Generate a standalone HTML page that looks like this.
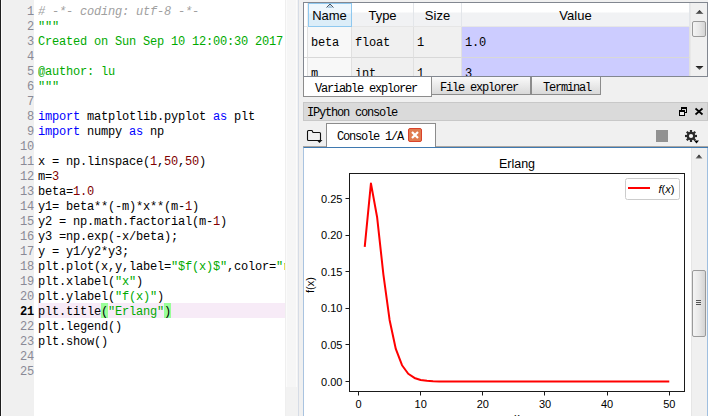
<!DOCTYPE html>
<html><head><meta charset="utf-8">
<style>
*{margin:0;padding:0;box-sizing:border-box}
html,body{width:708px;height:416px;overflow:hidden;background:#f0f0f0;position:relative}
.a{position:absolute}
#ed{left:0;top:0;width:297px;height:416px;background:#fff}
#edl{left:0;top:0;width:1px;height:416px;background:#1e1e1e}
#edw{left:1px;top:0;width:1px;height:416px;background:#fafafa}
#gut{left:2px;top:0;width:32px;height:416px;background:#f0f0f0}
#scr{left:285px;top:0;width:13px;height:416px;background:linear-gradient(90deg,#efefef 0,#efefef 1px,#fbfbfb 1px,#fbfbfb 2px,#f6f6f6 2px,#f6f6f6 11px,#fbfbfb 11px,#fbfbfb 12px,#f2f2f2 12px)}
#scrb{left:286px;top:387px;width:11px;height:29px;background:#f2f2f2}
#spl{left:298px;top:0;width:1px;height:416px;background:#d6dce6}
.code{font-family:"Liberation Mono",monospace;font-size:12px;letter-spacing:-0.2px;line-height:15px;white-space:pre}
#nums{left:2px;top:5px;width:32px;text-align:right;color:#8a8a96}
#src{left:38px;top:5px;width:247px;overflow:hidden;color:#000}
#cur{left:38px;top:303px;width:247px;height:15px;background:#f7ebf7}
.cm{color:#a0a0a0;font-style:italic}
.st{color:#00aa00}
.kw{color:#0000ff}
.nu{color:#800000}
.br{background:#99ff99}

/* right pane */
#tbl{left:303px;top:2px;width:405px;height:75px;border:1px solid #828790;background:#fff;overflow:hidden}
.hd{position:absolute;top:0;height:24px;background:linear-gradient(#ffffff 0,#ffffff 9px,#f1f2f4 10px,#f1f2f4 100%);border-right:1px solid #e3e6ea;border-bottom:1px solid #e6e6e6;font-family:"Liberation Sans",sans-serif;font-size:13px;color:#000;text-align:center;line-height:26px}
.cell{position:absolute;height:31px;border-right:1px solid #e0e0e0;border-bottom:1px solid #d8d8d8;font-family:"Liberation Mono",monospace;font-size:12px;letter-spacing:-0.2px;line-height:32px;padding-left:3px;color:#000}
.tab{position:absolute;font-family:"Liberation Mono",monospace;font-size:12px;letter-spacing:-1.2px;color:#000;white-space:pre}
</style></head><body>
<div class="a" id="ed"></div>
<div class="a" id="gut"></div>
<div class="a" id="edl"></div>
<div class="a" id="edw"></div>
<div class="a" id="cur"></div>
<div class="a" style="left:101px;top:303px;width:7px;height:15px;background:#99ff99"></div>
<div class="a" style="left:164px;top:303px;width:7px;height:15px;background:#99ff99"></div>
<div class="a" id="scr"></div>
<div class="a" id="scrb"></div>
<div class="a" id="spl"></div>
<div class="a code" id="nums">1
2
3
4
5
6
7
8
9
10
11
12
13
14
15
16
17
18
19
20
<b style="color:#000">21</b>
22
23
24
25</div>
<div class="a code" id="src"><span class="cm"># -*- coding: utf-8 -*-</span>
<span class="st">"""</span>
<span class="st">Created on Sun Sep 10 12:00:30 2017</span>

<span class="st">@author: lu</span>
<span class="st">"""</span>

<span class="kw">import</span> matplotlib.pyplot <span class="kw">as</span> plt
<span class="kw">import</span> numpy <span class="kw">as</span> np

x = np.linspace(<span class="nu">1</span>,<span class="nu">50</span>,<span class="nu">50</span>)
m=<span class="nu">3</span>
beta=<span class="nu">1.0</span>
y1= beta**(-m)*x**(m-<span class="nu">1</span>)
y2 = np.math.factorial(m-<span class="nu">1</span>)
y3 =np.exp(-x/beta);
y = y1/y2*y3;
plt.plot(x,y,label=<span class="st">"$f(x)$"</span>,color=<span class="st">"r"</span>)
plt.xlabel(<span class="st">"x"</span>)
plt.ylabel(<span class="st">"f(x)"</span>)
plt.title(<span class="st">"Erlang"</span>)
plt.legend()
plt.show()
</div>

<div class="a" id="tbl">
 <div class="hd" style="left:0;width:4px;background:#fff;border-right:1px solid #eee"></div>
 <div class="hd" style="left:4px;width:44px;background:linear-gradient(#eef7fd 0,#eef7fd 9px,#dcedf8 10px,#dcedf8 100%);border:1px solid #8fc8ef;text-indent:-1px;line-height:24px">Name</div>
 <div class="hd" style="left:48px;width:62px">Type</div>
 <div class="hd" style="left:110px;width:48px">Size</div>
 <div class="hd" style="left:158px;width:228px">Value</div>
 <div class="cell" style="left:0;top:24px;width:4px;background:#fff;padding:0"></div>
 <div class="cell" style="left:4px;top:24px;width:44px;background:#f8f8f8">beta</div>
 <div class="cell" style="left:48px;top:24px;width:62px;background:#f0f0f0">float</div>
 <div class="cell" style="left:110px;top:24px;width:48px;background:#f0f0f0">1</div>
 <div class="cell" style="left:158px;top:24px;width:228px;background:#ccccff">1.0</div>
 <div class="cell" style="left:0;top:55px;width:4px;background:#fff;padding:0"></div>
 <div class="cell" style="left:4px;top:55px;width:44px;background:#f8f8f8">m</div>
 <div class="cell" style="left:48px;top:55px;width:62px;background:#f0f0f0">int</div>
 <div class="cell" style="left:110px;top:55px;width:48px;background:#f0f0f0">1</div>
 <div class="cell" style="left:158px;top:55px;width:228px;background:#ccccff">3</div>
</div>

<div class="a" style="left:303px;top:77px;width:129px;height:20px;background:#fff;border:1px solid #8c8c8c;border-top:none"></div>
<div class="tab" style="left:315px;top:82px">Variable explorer</div>
<div class="a" style="left:431px;top:77px;width:100px;height:18px;background:linear-gradient(#fafafa,#e6e6e6 60%,#d9d9d9);border:1px solid #8c8c8c;border-top:none"></div>
<div class="tab" style="left:440px;top:80.5px">File explorer</div>
<div class="a" style="left:531px;top:77px;width:70px;height:18px;background:linear-gradient(#fafafa,#e6e6e6 60%,#d9d9d9);border:1px solid #8c8c8c;border-top:none"></div>
<div class="tab" style="left:543px;top:80.5px">Terminal</div>
<div class="a" style="left:303px;top:102px;width:405px;height:19px;background:#dadada;border:1px solid #c8c8c8"></div>
<div class="tab" style="left:307px;top:106px">IPython console</div>
<div class="a" style="left:326px;top:123px;width:110px;height:25px;background:#fff;border:1px solid #8c8c8c;border-bottom:none"></div>
<div class="tab" style="left:337px;top:130px">Console 1/A</div>
<div class="a" style="left:408px;top:128px;width:14px;height:14px;background:#e07b50;border:1px solid #d9432b;border-radius:2px"></div>
<svg class="a" style="left:408px;top:128px" width="14" height="14"><path d="M4 4L10 10M10 4L4 10" stroke="#fff" stroke-width="2.2"/></svg>
<div class="a" style="left:303px;top:147px;width:405px;height:269px;background:#fff;border-top:1px solid #3f79b0;border-left:1px solid #a9c3e0"></div>
<div class="a" style="left:303px;top:146px;width:23px;height:1px;background:#aaa6a2"></div>
<div class="a" style="left:436px;top:146px;width:272px;height:1px;background:#aaa6a2"></div>

<svg class="a" style="left:306px;top:128px" width="18" height="16"><path d="M2.5 2.5H6L7 4.5H13.5Q14.5 4.5 14.5 5.5V11.5Q14.5 12.5 13.5 12.5H2.5Q1.5 12.5 1.5 11.5V3.5Q1.5 2.5 2.5 2.5Z" fill="none" stroke="#111" stroke-width="1.1"/><path d="M10.5 12H16.5L13.5 15Z" fill="#111"/></svg>
<svg class="a" style="left:678px;top:106px" width="11" height="11"><rect x="3.5" y="1.5" width="5" height="5" fill="none" stroke="#000" stroke-width="1"/><path d="M3.5 2.5H8.5" stroke="#000" stroke-width="1"/><rect x="1.5" y="4.5" width="5" height="5" fill="#eeeeee" stroke="#000" stroke-width="1"/><path d="M1.5 5.5H6.5" stroke="#000" stroke-width="1"/></svg>
<svg class="a" style="left:694px;top:107px" width="10" height="10"><path d="M1.5 1.5L8.5 7.5M8.5 1.5L1.5 7.5" stroke="#000" stroke-width="1.7"/></svg>
<div class="a" style="left:656px;top:130px;width:12px;height:12px;background:#929292"></div>
<svg class="a" style="left:684px;top:129px" width="16" height="16"><g transform="translate(7,7)" fill="#2a2a2a"><circle r="4.3"/><rect x="-1.1" y="-6" width="2.2" height="12"/><rect x="-1.1" y="-6" width="2.2" height="12" transform="rotate(45)"/><rect x="-1.1" y="-6" width="2.2" height="12" transform="rotate(90)"/><rect x="-1.1" y="-6" width="2.2" height="12" transform="rotate(135)"/></g><circle cx="7" cy="7" r="2.1" fill="#f4f4f4"/><path d="M10 11.5H15L12.5 14.5Z" fill="#000"/></svg>

<svg class="a" id="plot" style="left:0;top:0" width="708" height="416" font-family="Liberation Sans" font-size="11" fill="#000">
<text x="517" y="168" text-anchor="middle" font-size="12.5">Erlang</text>
<rect x="349.5" y="173.5" width="335" height="218" fill="none" stroke="#1a1a1a" stroke-width="1"/>
<line x1="358.5" y1="391.5" x2="358.5" y2="395.5" stroke="#1a1a1a" stroke-width="1"/><text x="358.5" y="408" text-anchor="middle">0</text><line x1="420.5" y1="391.5" x2="420.5" y2="395.5" stroke="#1a1a1a" stroke-width="1"/><text x="420.7" y="408" text-anchor="middle">10</text><line x1="482.5" y1="391.5" x2="482.5" y2="395.5" stroke="#1a1a1a" stroke-width="1"/><text x="482.8" y="408" text-anchor="middle">20</text><line x1="544.5" y1="391.5" x2="544.5" y2="395.5" stroke="#1a1a1a" stroke-width="1"/><text x="545.0" y="408" text-anchor="middle">30</text><line x1="607.5" y1="391.5" x2="607.5" y2="395.5" stroke="#1a1a1a" stroke-width="1"/><text x="607.1" y="408" text-anchor="middle">40</text><line x1="669.5" y1="391.5" x2="669.5" y2="395.5" stroke="#1a1a1a" stroke-width="1"/><text x="669.3" y="408" text-anchor="middle">50</text><line x1="345.5" y1="381.5" x2="349.5" y2="381.5" stroke="#1a1a1a" stroke-width="1"/><text x="342.5" y="385.6" text-anchor="end">0.00</text><line x1="345.5" y1="344.5" x2="349.5" y2="344.5" stroke="#1a1a1a" stroke-width="1"/><text x="342.5" y="349.0" text-anchor="end">0.05</text><line x1="345.5" y1="308.5" x2="349.5" y2="308.5" stroke="#1a1a1a" stroke-width="1"/><text x="342.5" y="312.4" text-anchor="end">0.10</text><line x1="345.5" y1="271.5" x2="349.5" y2="271.5" stroke="#1a1a1a" stroke-width="1"/><text x="342.5" y="275.8" text-anchor="end">0.15</text><line x1="345.5" y1="235.5" x2="349.5" y2="235.5" stroke="#1a1a1a" stroke-width="1"/><text x="342.5" y="239.2" text-anchor="end">0.20</text><line x1="345.5" y1="198.5" x2="349.5" y2="198.5" stroke="#1a1a1a" stroke-width="1"/><text x="342.5" y="202.5" text-anchor="end">0.25</text>
<polyline points="364.73,246.91 370.94,183.41 377.16,217.55 383.37,274.31 389.59,319.92 395.80,348.92 402.02,365.23 408.23,373.73 414.45,377.93 420.66,379.93 426.88,380.85 433.09,381.27 439.31,381.45 445.53,381.53 451.74,381.57 457.96,381.58 464.17,381.59 470.39,381.59 476.60,381.59 482.82,381.59 489.03,381.59 495.25,381.59 501.46,381.59 507.68,381.59 513.89,381.59 520.11,381.59 526.32,381.59 532.54,381.59 538.75,381.59 544.97,381.59 551.18,381.59 557.40,381.59 563.61,381.59 569.83,381.59 576.04,381.59 582.26,381.59 588.47,381.59 594.69,381.59 600.91,381.59 607.12,381.59 613.34,381.59 619.55,381.59 625.77,381.59 631.98,381.59 638.20,381.59 644.41,381.59 650.63,381.59 656.84,381.59 663.06,381.59 669.27,381.59" fill="none" stroke="#ff0000" stroke-width="2" stroke-linejoin="round"/>
<text transform="translate(314,285) rotate(-90)" text-anchor="middle">f(x)</text>
<text x="517" y="421" text-anchor="middle">x</text>
<rect x="625.5" y="178.5" width="54" height="21" rx="2" fill="#fff" stroke="#cccccc"/>
<line x1="628" y1="188" x2="650" y2="188" stroke="#ff0000" stroke-width="2"/>
<text x="658.5" y="192.5"><tspan font-style="italic">f</tspan>(<tspan font-style="italic">x</tspan>)</text>
</svg>

<div class="a" style="left:691px;top:148px;width:17px;height:268px;background:#f0f0f0;border-left:1px solid #e6e6e6;border-right:1px solid #9fbfe0"></div>
<svg class="a" style="left:695px;top:153px" width="10" height="8"><defs><linearGradient id="ag" x1="0" y1="0" x2="0" y2="1"><stop offset="0" stop-color="#111"/><stop offset="1" stop-color="#777"/></linearGradient></defs><path d="M0.5 5.5L4 1.5L7.5 5.5Z" fill="url(#ag)"/></svg>
<div class="a" style="left:692px;top:270px;width:14px;height:67px;border:1px solid #9a9a9a;border-radius:2px;background:linear-gradient(90deg,#f4f4f4,#e8e8e8 50%,#d4d4d4)"></div>
<svg class="a" style="left:695px;top:299px" width="8" height="8"><path d="M1 1.5H6M1 3.5H6M1 5.5H6" stroke="#555" stroke-width="1"/></svg>

<div class="a" style="left:690px;top:3px;width:17px;height:73px;background:#f0f0f0;border-left:1px solid #e8e8e8"></div>
<svg class="a" style="left:695px;top:9px" width="10" height="8"><path d="M0.5 5L4.5 1L8.5 5Z" fill="url(#ag)"/></svg>
<svg class="a" style="left:695px;top:65px" width="10" height="8"><path d="M0.5 1L4.5 5L8.5 1Z" fill="url(#ag)"/></svg>
<div class="a" style="left:692px;top:21px;width:14px;height:16px;border:1px solid #9a9a9a;border-radius:2px;background:linear-gradient(90deg,#f4f4f4,#e8e8e8 50%,#d4d4d4)"></div>

<svg class="a" style="left:326px;top:3px" width="9" height="6"><path d="M1 5L4 2L7 5Z" fill="#a8c8e0"/><path d="M0.5 4.5L4 1L7.5 4.5" fill="none" stroke="#4a5460" stroke-width="1"/></svg>
</body></html>
